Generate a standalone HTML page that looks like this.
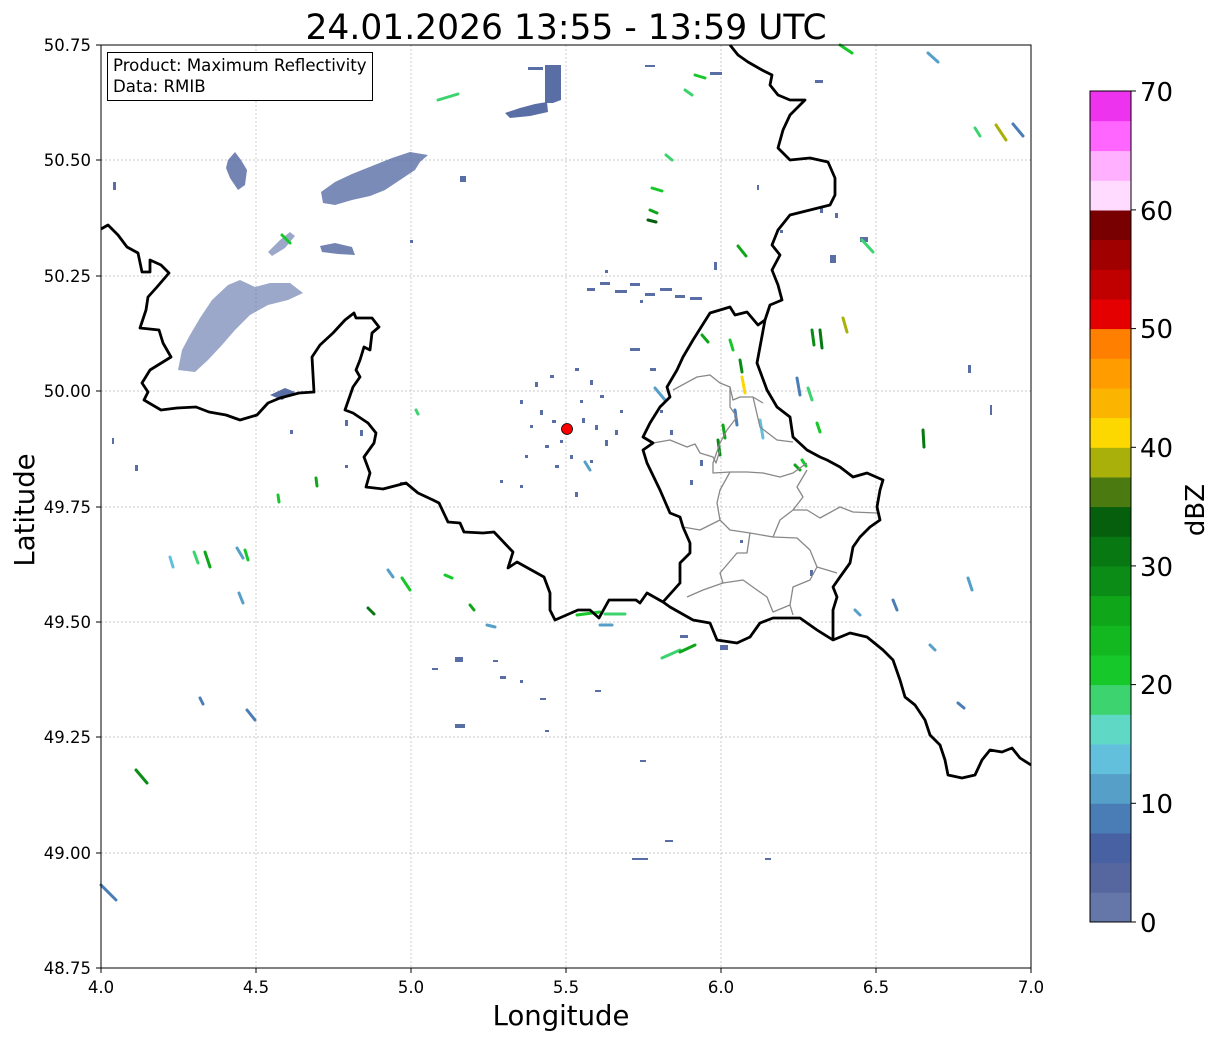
<!DOCTYPE html>
<html><head><meta charset="utf-8"><style>
html,body{margin:0;padding:0;background:#fff;}
svg{display:block;font-family:"DejaVu Sans","Liberation Sans",sans-serif;}
</style></head><body>
<svg width="1219" height="1040" viewBox="0 0 1219 1040" xmlns="http://www.w3.org/2000/svg">
<rect width="1219" height="1040" fill="#fff"/>
<g stroke="#b8b8b8" stroke-width="0.7" stroke-dasharray="2,2">
<line x1="256" y1="45" x2="256" y2="968"/><line x1="411" y1="45" x2="411" y2="968"/><line x1="566" y1="45" x2="566" y2="968"/><line x1="721" y1="45" x2="721" y2="968"/><line x1="876" y1="45" x2="876" y2="968"/>
<line x1="101" y1="160" x2="1031" y2="160"/><line x1="101" y1="276" x2="1031" y2="276"/><line x1="101" y1="391" x2="1031" y2="391"/><line x1="101" y1="507" x2="1031" y2="507"/><line x1="101" y1="622" x2="1031" y2="622"/><line x1="101" y1="737" x2="1031" y2="737"/><line x1="101" y1="853" x2="1031" y2="853"/>
</g>
<g fill="#5a6ea6">
<path d="M321,192 L335,182 L352,174 L372,166 L392,158 L410,152 L428,155 L420,162 L415,170 L400,180 L385,190 L370,196 L352,200 L335,205 L323,203Z" opacity="0.8"/>
<path d="M228,160 L235,152 L241,160 L247,170 L245,185 L238,190 L230,178 L226,168Z" opacity="0.85"/>
<path d="M545,65 L561,65 L561,100 L553,103 L545,103Z"/>
<path d="M505,113 L520,108 L535,104 L547,102 L548,112 L530,116 L510,118Z"/>
<rect x="528" y="67" width="15" height="3"/>
<path d="M320,246 L335,243 L352,247 L355,255 L338,254 L322,252Z" opacity="0.85"/>
<path d="M178,370 L182,350 L190,335 L200,318 L212,300 L228,285 L240,280 L255,287 L270,283 L290,283 L303,293 L288,300 L268,305 L250,315 L235,330 L222,345 L208,360 L195,372Z" opacity="0.6"/>
<path d="M268,252 L280,240 L290,232 L295,236 L285,248 L272,256Z" opacity="0.6"/>
<path d="M270,395 L285,388 L295,392 L282,400Z"/>
</g>
<g fill="#5a6ea6">
<rect x="113" y="182" width="3" height="8"/><rect x="460" y="176" width="6" height="6"/><rect x="410" y="240" width="3" height="3"/>
<rect x="587" y="288" width="8" height="3"/><rect x="600" y="282" width="10" height="3"/><rect x="615" y="290" width="12" height="3"/><rect x="630" y="283" width="10" height="3"/><rect x="645" y="293" width="10" height="3"/><rect x="660" y="288" width="12" height="3"/><rect x="675" y="295" width="10" height="3"/><rect x="690" y="297" width="12" height="3"/><rect x="605" y="270" width="3" height="3"/><rect x="640" y="300" width="3" height="3"/>
<rect x="630" y="348" width="10" height="3"/><rect x="650" y="368" width="6" height="3"/>
<rect x="535" y="382" width="3" height="5"/><rect x="550" y="375" width="4" height="3"/><rect x="575" y="368" width="4" height="3"/><rect x="590" y="380" width="3" height="5"/><rect x="600" y="395" width="4" height="3"/><rect x="520" y="400" width="3" height="4"/><rect x="540" y="410" width="3" height="5"/><rect x="552" y="420" width="4" height="3"/><rect x="582" y="418" width="3" height="5"/><rect x="595" y="425" width="3" height="5"/><rect x="605" y="440" width="3" height="6"/><rect x="615" y="430" width="3" height="5"/><rect x="560" y="440" width="3" height="3"/><rect x="545" y="445" width="4" height="3"/><rect x="570" y="455" width="3" height="4"/><rect x="525" y="455" width="3" height="3"/><rect x="590" y="460" width="3" height="3"/><rect x="555" y="465" width="4" height="3"/><rect x="520" y="485" width="3" height="3"/><rect x="575" y="492" width="3" height="5"/><rect x="500" y="480" width="3" height="3"/><rect x="580" y="400" width="3" height="3"/><rect x="530" y="425" width="3" height="3"/><rect x="620" y="410" width="3" height="3"/>
<rect x="345" y="420" width="3" height="6"/><rect x="360" y="430" width="3" height="6"/><rect x="290" y="430" width="3" height="4"/><rect x="135" y="465" width="3" height="6"/><rect x="112" y="438" width="2" height="6"/><rect x="345" y="465" width="3" height="3"/><rect x="400" y="482" width="3" height="3"/>
<rect x="720" y="645" width="8" height="5"/><rect x="680" y="635" width="8" height="3"/><rect x="500" y="676" width="6" height="3"/><rect x="520" y="680" width="3" height="3"/><rect x="540" y="698" width="6" height="2"/><rect x="595" y="690" width="6" height="2"/><rect x="455" y="657" width="8" height="5"/><rect x="432" y="668" width="6" height="2"/><rect x="455" y="724" width="10" height="4"/><rect x="545" y="730" width="4" height="2"/><rect x="632" y="858" width="16" height="2"/><rect x="665" y="840" width="8" height="2"/><rect x="765" y="858" width="6" height="2"/><rect x="640" y="760" width="6" height="2"/><rect x="493" y="660" width="5" height="2"/>
<rect x="810" y="570" width="3" height="6"/><rect x="740" y="540" width="3" height="3"/><rect x="700" y="460" width="3" height="6"/><rect x="690" y="480" width="3" height="5"/><rect x="670" y="430" width="3" height="5"/><rect x="660" y="410" width="3" height="3"/>
<rect x="990" y="405" width="2" height="10"/><rect x="968" y="365" width="3" height="8"/><rect x="815" y="80" width="8" height="3"/><rect x="780" y="230" width="3" height="3"/><rect x="714" y="262" width="3" height="8"/><rect x="830" y="255" width="6" height="8"/><rect x="860" y="237" width="8" height="5"/><rect x="835" y="213" width="3" height="5"/><rect x="710" y="72" width="12" height="3"/><rect x="645" y="65" width="10" height="2"/><rect x="757" y="185" width="2" height="5"/><rect x="820" y="207" width="3" height="6"/>
</g>
<g stroke-width="3" fill="none" stroke-linecap="round">
<path d="M438,100 L458,94" stroke="#3dd46f"/>
<path d="M685,90 L692,95" stroke="#3dd46f"/><path d="M695,75 L705,78" stroke="#16c82a"/>
<path d="M840,45 L852,53" stroke="#16c82a"/><path d="M928,53 L938,62" stroke="#559fc8"/>
<path d="M975,128 L980,136" stroke="#3dd46f"/><path d="M996,125 L1006,140" stroke="#aab00a"/><path d="M1013,124 L1023,136" stroke="#4a7db5"/>
<path d="M666,155 L672,160" stroke="#3dd46f"/><path d="M652,188 L662,191" stroke="#16c82a"/><path d="M650,210 L657,213" stroke="#0fa61a"/><path d="M648,220 L656,222" stroke="#065f0d"/>
<path d="M738,246 L746,256" stroke="#0fa61a"/><path d="M862,240 L873,252" stroke="#3dd46f"/><path d="M843,318 L847,332" stroke="#aab00a"/>
<path d="M702,335 L708,342" stroke="#0fa61a"/><path d="M730,340 L733,350" stroke="#16c82a"/><path d="M742,377 L745,393" stroke="#fcd800"/><path d="M740,360 L742,372" stroke="#0b8c16"/>
<path d="M820,330 L822,348" stroke="#087812"/><path d="M812,330 L814,345" stroke="#0b8c16"/><path d="M797,378 L800,395" stroke="#4a7db5"/><path d="M808,388 L812,400" stroke="#3dd46f"/><path d="M817,423 L820,432" stroke="#16c82a"/>
<path d="M923,430 L924,447" stroke="#087812"/><path d="M723,425 L725,438" stroke="#0fa61a"/><path d="M718,440 L720,455" stroke="#0b8c16"/><path d="M760,420 L763,438" stroke="#63c0dc"/><path d="M735,410 L737,425" stroke="#4a7db5"/>
<path d="M795,465 L800,470" stroke="#0fa61a"/><path d="M802,460 L806,466" stroke="#16c82a"/>
<path d="M968,578 L972,590" stroke="#559fc8"/><path d="M893,600 L897,610" stroke="#4a7db5"/><path d="M855,610 L860,615" stroke="#559fc8"/>
<path d="M958,703 L964,708" stroke="#4a7db5"/><path d="M930,645 L935,650" stroke="#559fc8"/>
<path d="M662,658 L680,650" stroke="#3dd46f"/><path d="M680,652 L695,645" stroke="#0fa61a"/><path d="M577,615 L600,612" stroke="#16c82a"/><path d="M605,614 L625,614" stroke="#3dd46f"/><path d="M600,625 L612,625" stroke="#559fc8"/>
<path d="M388,570 L393,577" stroke="#559fc8"/><path d="M402,578 L410,590" stroke="#16c82a"/><path d="M368,608 L374,614" stroke="#087812"/><path d="M445,575 L452,578" stroke="#16c82a"/><path d="M470,605 L474,610" stroke="#0fa61a"/><path d="M487,625 L495,627" stroke="#559fc8"/>
<path d="M170,557 L173,567" stroke="#63c0dc"/><path d="M194,552 L198,563" stroke="#3dd46f"/><path d="M205,552 L210,567" stroke="#0fa61a"/><path d="M237,548 L243,558" stroke="#559fc8"/><path d="M245,550 L248,560" stroke="#16c82a"/><path d="M239,593 L243,603" stroke="#559fc8"/>
<path d="M278,495 L279,502" stroke="#16c82a"/><path d="M316,478 L317,486" stroke="#0fa61a"/><path d="M416,410 L418,414" stroke="#3dd46f"/>
<path d="M200,698 L203,704" stroke="#4a7db5"/><path d="M247,710 L255,720" stroke="#4a7db5"/><path d="M136,770 L147,783" stroke="#0b8c16"/><path d="M101,885 L116,900" stroke="#4a7db5"/>
<path d="M282,235 L290,243" stroke="#16c82a"/><path d="M655,388 L665,400" stroke="#559fc8"/><path d="M585,462 L590,470" stroke="#559fc8"/>
</g>
<g fill="none" stroke="#888" stroke-width="1.3" stroke-linejoin="round">
<path d="M653,443 L670,440 L687,447 L695,444 L700,453 L713,457 L716,463 L720,450"/>
<path d="M673,390 L697,377 L710,375 L720,383 L730,387 L733,400 L740,397 L753,397 L763,403"/>
<path d="M730,387 L730,407 L737,417 L727,430 L720,443 L713,463 L713,473 L730,472 L747,472 L763,473 L780,477 L793,473 L807,463"/>
<path d="M753,397 L760,427 L777,440 L793,442"/>
<path d="M730,472 L720,490 L717,503 L720,520 L700,530 L683,527"/>
<path d="M720,520 L730,530 L750,533 L773,537 L780,520 L793,510 L807,510 L820,518 L840,507 L853,512 L877,513"/>
<path d="M793,510 L803,497 L797,487 L807,470"/>
<path d="M773,537 L797,538 L810,550 L817,567 L837,573"/>
<path d="M750,533 L747,553 L737,553 L720,573 L723,583 L703,590 L687,597"/>
<path d="M723,583 L743,580 L757,590 L767,597 L773,612 L790,605 L793,615"/>
<path d="M790,605 L793,587 L810,580 L817,567"/>
</g>
<g fill="none" stroke="#000" stroke-width="2.8" stroke-linejoin="round">
<path d="M101,229 L108,225 L118,235 L127,247 L138,253 L142,272 L150,272 L150,260 L161,265 L169,273 L157,287 L148,297 L146,310 L140,328 L159,330 L163,343 L171,357 L150,370 L142,383 L148,392 L144,400 L161,410 L177,408 L196,407 L209,412 L226,415 L240,420 L257,415 L268,403 L280,398 L299,393 L314,392 L312,357 L320,345 L333,333 L345,320 L354,313 L356,318 L372,318 L379,327 L372,333 L370,350 L364,347 L360,360 L356,370 L360,377 L353,387 L345,410 L353,413 L368,423 L376,433 L374,443 L364,457 L370,473 L366,487 L383,489 L406,483 L418,493 L433,500 L439,503 L448,522 L460,523 L464,532 L483,533 L494,532 L513,552 L508,568 L517,562 L544,577 L550,593 L550,610 L555,620 L578,610 L590,610 L599,618 L609,600 L620,600 L636,600 L640,603 L647,593 L663,602 L670,607 L693,620 L710,623 L717,640 L737,643 L750,637 L760,623 L773,618 L800,618 L817,630 L833,640 L850,633 L867,637 L883,650 L893,660 L900,680 L905,697 L915,705 L925,720 L930,735 L940,745 L945,760 L948,775 L962,778 L975,775 L982,760 L990,750 L1002,752 L1012,748 L1020,758 L1031,765"/>
<path d="M663,602 L680,583 L680,563 L690,553 L690,543 L683,527 L680,517 L670,513 L660,490 L647,463 L643,450 L653,443 L643,437 L650,423 L660,407 L670,397 L667,387 L677,370 L683,357 L693,340 L710,313 L730,307 L735,315 L747,312 L758,325 L765,320 L757,363 L767,390 L777,407 L790,417 L793,437 L807,450 L820,457 L827,460 L840,467 L853,477 L867,473 L883,480 L880,490 L877,507 L880,520 L870,527 L860,537 L853,547 L850,563 L840,577 L833,587 L837,597 L833,610 L833,640"/>
<path d="M765,320 L770,305 L782,300 L778,285 L772,270 L780,255 L772,245 L778,230 L790,215 L810,210 L830,205 L835,195 L835,178 L828,162 L810,158 L790,160 L778,148 L783,130 L790,115 L805,100 L790,100 L778,95 L770,85 L772,75 L762,70 L748,62 L738,55 L730,45"/>
</g>
<circle cx="567" cy="429" r="5.5" fill="#f00" stroke="#000" stroke-width="0.8"/>
<rect x="101" y="45" width="930" height="923" fill="none" stroke="#000" stroke-width="1"/>
<g stroke="#000" stroke-width="1">
<line x1="101" y1="968" x2="101" y2="973"/><line x1="256" y1="968" x2="256" y2="973"/><line x1="411" y1="968" x2="411" y2="973"/><line x1="566" y1="968" x2="566" y2="973"/><line x1="721" y1="968" x2="721" y2="973"/><line x1="876" y1="968" x2="876" y2="973"/><line x1="1031" y1="968" x2="1031" y2="973"/>
<line x1="96" y1="45" x2="101" y2="45"/><line x1="96" y1="160" x2="101" y2="160"/><line x1="96" y1="276" x2="101" y2="276"/><line x1="96" y1="391" x2="101" y2="391"/><line x1="96" y1="507" x2="101" y2="507"/><line x1="96" y1="622" x2="101" y2="622"/><line x1="96" y1="737" x2="101" y2="737"/><line x1="96" y1="853" x2="101" y2="853"/><line x1="96" y1="968" x2="101" y2="968"/>
</g>
<g font-size="16.5" fill="#000" text-anchor="end">
<text x="91" y="51">50.75</text><text x="91" y="166">50.50</text><text x="91" y="282">50.25</text><text x="91" y="397">50.00</text><text x="91" y="513">49.75</text><text x="91" y="628">49.50</text><text x="91" y="743">49.25</text><text x="91" y="859">49.00</text><text x="91" y="974">48.75</text>
</g>
<g font-size="16.5" fill="#000" text-anchor="middle">
<text x="101" y="993">4.0</text><text x="256" y="993">4.5</text><text x="411" y="993">5.0</text><text x="566" y="993">5.5</text><text x="721" y="993">6.0</text><text x="876" y="993">6.5</text><text x="1031" y="993">7.0</text>
</g>
<text x="561" y="1025" font-size="27.5" text-anchor="middle">Longitude</text>
<text transform="translate(34,510) rotate(-90)" font-size="27.5" text-anchor="middle">Latitude</text>
<text x="566" y="39" font-size="34.5" text-anchor="middle">24.01.2026 13:55 - 13:59 UTC</text>
<rect x="107.5" y="52.5" width="265" height="48" fill="#fff" stroke="#000" stroke-width="1"/>
<text x="113" y="71" font-size="16.6">Product: Maximum Reflectivity</text>
<text x="113" y="92" font-size="16.6">Data: RMIB</text>
<g>
<rect x="1090" y="892.3" width="41" height="30.2" fill="#6577a8"/>
<rect x="1090" y="862.6" width="41" height="30.2" fill="#56679f"/>
<rect x="1090" y="832.9" width="41" height="30.2" fill="#4761a2"/>
<rect x="1090" y="803.3" width="41" height="30.2" fill="#4a7db5"/>
<rect x="1090" y="773.6" width="41" height="30.2" fill="#559fc8"/>
<rect x="1090" y="743.9" width="41" height="30.2" fill="#63c0dc"/>
<rect x="1090" y="714.3" width="41" height="30.2" fill="#5fd8c6"/>
<rect x="1090" y="684.6" width="41" height="30.2" fill="#3dd46f"/>
<rect x="1090" y="654.9" width="41" height="30.2" fill="#16c82a"/>
<rect x="1090" y="625.3" width="41" height="30.2" fill="#13b71f"/>
<rect x="1090" y="595.6" width="41" height="30.2" fill="#0fa61a"/>
<rect x="1090" y="565.9" width="41" height="30.2" fill="#0b8c16"/>
<rect x="1090" y="536.3" width="41" height="30.2" fill="#087812"/>
<rect x="1090" y="506.6" width="41" height="30.2" fill="#065f0d"/>
<rect x="1090" y="476.9" width="41" height="30.2" fill="#4a7a10"/>
<rect x="1090" y="447.3" width="41" height="30.2" fill="#aab00a"/>
<rect x="1090" y="417.6" width="41" height="30.2" fill="#fcd800"/>
<rect x="1090" y="387.9" width="41" height="30.2" fill="#fbb400"/>
<rect x="1090" y="358.3" width="41" height="30.2" fill="#ff9c00"/>
<rect x="1090" y="328.6" width="41" height="30.2" fill="#ff7f00"/>
<rect x="1090" y="298.9" width="41" height="30.2" fill="#e40000"/>
<rect x="1090" y="269.3" width="41" height="30.2" fill="#c00000"/>
<rect x="1090" y="239.6" width="41" height="30.2" fill="#a00000"/>
<rect x="1090" y="209.9" width="41" height="30.2" fill="#780000"/>
<rect x="1090" y="180.3" width="41" height="30.2" fill="#ffdcff"/>
<rect x="1090" y="150.6" width="41" height="30.2" fill="#ffb0ff"/>
<rect x="1090" y="120.9" width="41" height="30.2" fill="#ff66ff"/>
<rect x="1090" y="91" width="41" height="30.2" fill="#ee33ee"/>
<rect x="1090" y="91" width="41" height="831" fill="none" stroke="#000" stroke-width="1"/>
<g stroke="#000" stroke-width="1">
<line x1="1131" y1="922" x2="1136" y2="922"/><line x1="1131" y1="803.3" x2="1136" y2="803.3"/><line x1="1131" y1="684.6" x2="1136" y2="684.6"/><line x1="1131" y1="565.9" x2="1136" y2="565.9"/><line x1="1131" y1="447.3" x2="1136" y2="447.3"/><line x1="1131" y1="328.6" x2="1136" y2="328.6"/><line x1="1131" y1="209.9" x2="1136" y2="209.9"/><line x1="1131" y1="91" x2="1136" y2="91"/>
</g>
<g font-size="26" fill="#000">
<text x="1140" y="932">0</text><text x="1140" y="813">10</text><text x="1140" y="694">20</text><text x="1140" y="576">30</text><text x="1140" y="457">40</text><text x="1140" y="338">50</text><text x="1140" y="220">60</text><text x="1140" y="101">70</text>
</g>
<text transform="translate(1204,510) rotate(-90)" font-size="26" text-anchor="middle">dBZ</text>
</g>
</svg>
</body></html>
